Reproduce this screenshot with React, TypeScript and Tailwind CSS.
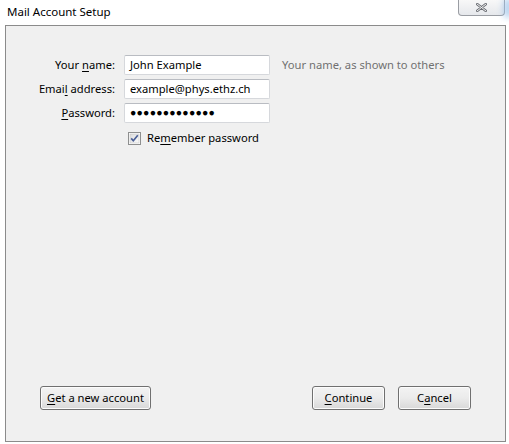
import React from "react";

// Mail Account Setup dialog — Windows 7 era Thunderbird look.

const FONT = { fontFamily: '"Noto Sans", "Liberation Sans", sans-serif' };

function Key({ children }: { children: React.ReactNode }) {
  return <span className="underline underline-offset-[2px]">{children}</span>;
}

function Field({ children }: { children: React.ReactNode }) {
  return (
    <div className="flex h-[20px] w-[146px] items-center rounded-[2px] border border-[#d6d8dc] border-t-[#b9bcc2] bg-white pl-[5px] text-[11.2px] text-black">
      {children}
    </div>
  );
}

function Button({
  children,
  className = "",
}: {
  children: React.ReactNode;
  className?: string;
}) {
  return (
    <div
      className={`flex h-[24px] items-center justify-center rounded-[3px] border border-[#707070] bg-gradient-to-b from-[#f3f3f3] via-[#ebebeb] to-[#d8d8d8] text-[11.2px] text-black shadow-[inset_0_0_0_1px_#fcfcfc] ${className}`}
    >
      {children}
    </div>
  );
}

function CheckBox() {
  return (
    <svg width="13" height="13" viewBox="0 0 13 13">
      <defs>
        <linearGradient id="cb" x1="0" y1="0" x2="1" y2="1">
          <stop offset="0" stopColor="#dcdcdc" />
          <stop offset="1" stopColor="#fbfbfb" />
        </linearGradient>
      </defs>
      <rect x="0.5" y="0.5" width="12" height="12" fill="#fff" stroke="#8e8f8f" />
      <rect x="2" y="2" width="9" height="9" fill="url(#cb)" stroke="#c5c5c5" strokeWidth="0.6" />
      <path d="M3.2 6.4 L5.3 8.8 L9.8 3.2" fill="none" stroke="#4a5f97" strokeWidth="1.7" />
    </svg>
  );
}

export default function App() {
  return (
    <div className="relative flex h-[444px] w-[509px] flex-col bg-white" style={FONT}>
      {/* title bar */}
      <div className="flex h-[25px] items-start justify-between">
        <div className="pl-[7px] pt-[3px] text-[11.5px] text-black">Mail Account Setup</div>
        <div className="relative mr-[4px] flex h-[16px] w-[47px] items-center justify-center rounded-b-[4px] border border-t-0 border-[#9a9da3] bg-gradient-to-b from-[#f8f8f8] to-[#e6e8ec]">
          <svg width="11" height="9" viewBox="0 0 11 9">
            <path
              d="M1 1 L10 8 M10 1 L1 8"
              stroke="#6b6e74"
              strokeWidth="2.6"
              strokeLinecap="round"
            />
            <path
              d="M1 1 L10 8 M10 1 L1 8"
              stroke="#f4f4f4"
              strokeWidth="1"
              strokeLinecap="round"
            />
          </svg>
        </div>
      </div>
      <div className="pointer-events-none absolute right-[-4px] top-[-2px] h-[20px] w-[10px] rounded-full bg-[#9cc2ea] opacity-70 blur-[3px]" />

      {/* panel */}
      <div className="mb-[2px] ml-[5px] mr-[3px] flex flex-1 flex-col border border-[#8b8b8b] bg-[#f0f0f0] text-[11.2px] text-black">
        <div className="grid grid-cols-[109px_146px_auto] items-center gap-x-[9px] gap-y-[4px] pt-[29px]">
          <div className="text-right">
            Your <Key>n</Key>ame:
          </div>
          <Field>John Example</Field>
          <div className="pl-[3px] text-[#707070]">Your name, as shown to others</div>

          <div className="text-right">
            Emai<Key>l</Key> address:
          </div>
          <Field>example@phys.ethz.ch</Field>
          <div />

          <div className="text-right">
            <Key>P</Key>assword:
          </div>
          <Field>
            <span className="text-[10.5px] tracking-[0.2px]">●●●●●●●●●●●●●</span>
          </Field>
          <div />

          <div />
          <div className="mt-[3px] flex items-center gap-[6px] pl-[4px]">
            <CheckBox />
            <span>
              Re<Key>m</Key>ember password
            </span>
          </div>
          <div />
        </div>

        <div className="mt-auto mb-[31px] flex items-center justify-between px-[34px]">
          <Button className="w-[111px]">
            <span>
              <Key>G</Key>et a new account
            </span>
          </Button>
          <div className="flex gap-[13px]">
            <Button className="w-[73px]">
              <span>
                <Key>C</Key>ontinue
              </span>
            </Button>
            <Button className="w-[73px]">
              <span>
                C<Key>a</Key>ncel
              </span>
            </Button>
          </div>
        </div>
      </div>
    </div>
  );
}
